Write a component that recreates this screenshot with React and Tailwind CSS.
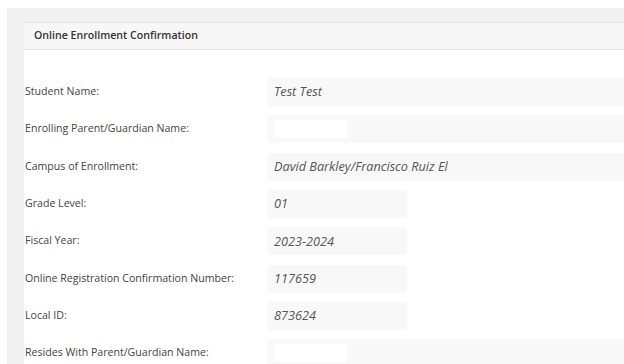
const rows = [
  { label: 'Student Name:', value: 'Test Test', wide: true },
  { label: 'Enrolling Parent/Guardian Name:', blank: true, wide: true },
  { label: 'Campus of Enrollment:', value: 'David Barkley/Francisco Ruiz El', wide: true },
  { label: 'Grade Level:', value: '01' },
  { label: 'Fiscal Year:', value: '2023-2024' },
  { label: 'Online Registration Confirmation Number:', value: '117659' },
  { label: 'Local ID:', value: '873624' },
  { label: 'Resides With Parent/Guardian Name:', blank: true, wide: true },
];

function Field({ row }) {
  return (
    <div className="flex h-[28px] items-center">
      <div className="w-[243px] pl-px text-[10.6px] text-[#444]">{row.label}</div>
      <div
        className={
          'flex h-[28px] items-center rounded-[4px] bg-[#f8f8f8] px-[7px] text-[12.7px] italic text-[#555] ' +
          (row.wide ? 'w-[420px]' : 'w-[140px]')
        }
      >
        {row.blank ? <div className="h-[18px] w-[73px] bg-white" /> : row.value}
      </div>
    </div>
  );
}

export default function App() {
  return (
    <div
      className="h-[364px] w-[624px] overflow-hidden bg-white"
      style={{ fontFamily: '"Open Sans", "Liberation Sans", sans-serif' }}
    >
      <div className="ml-[7px] mt-[8px] h-[400px] w-[700px] bg-[#f1f1f1] pl-[17px] pt-[14px]">
        <div className="h-full bg-white">
          <div className="flex h-[28px] items-center border-y border-[#e4e4e4] bg-[#f7f7f7] pl-[10px] text-[10.6px] font-semibold text-[#333]">
            Online Enrollment Confirmation
          </div>
          <div className="flex flex-col gap-[9.33px] pt-[28px]">
            {rows.map((row) => (
              <Field key={row.label} row={row} />
            ))}
          </div>
        </div>
      </div>
    </div>
  );
}
